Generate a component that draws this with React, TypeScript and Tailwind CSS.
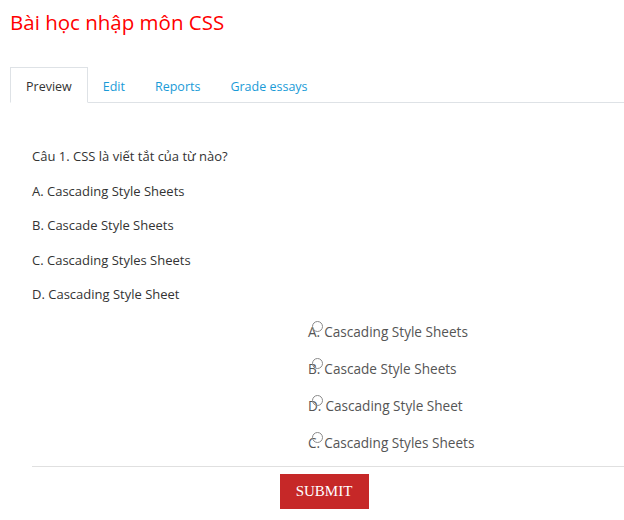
import React from "react";

const questions = [
  "A. Cascading Style Sheets",
  "B. Cascade Style Sheets",
  "C. Cascading Styles Sheets",
  "D. Cascading Style Sheet",
];

const radios = [
  { label: "A.", text: "Cascading Style Sheets" },
  { label: "B.", text: "Cascade Style Sheets" },
  { label: "D.", text: "Cascading Style Sheet" },
  { label: "C.", text: "Cascading Styles Sheets" },
];

export default function App() {
  return (
    <div
      className="w-[624px] h-[520px] bg-white overflow-hidden"
      style={{ fontFamily: '"Open Sans", "Noto Sans", sans-serif' }}
    >
      <h1 className="pl-[10px] pt-[7px] text-[20.5px] leading-[30px] text-[#ff0000] font-normal">
        Bài học nhập môn CSS
      </h1>

      <div className="mt-[30px] ml-[10px] flex border-b border-[#dee2e6] h-[36px] text-[12.5px]">
        <div className="px-[15px] pt-[5px] flex items-center border border-[#dee2e6] border-b-white -mb-px bg-white text-[#333]">
          Preview
        </div>
        <div className="px-[15px] pt-[6px] flex items-center text-[#1a9bd7]">Edit</div>
        <div className="px-[15px] pt-[6px] flex items-center text-[#1a9bd7]">Reports</div>
        <div className="px-[15px] pt-[6px] flex items-center text-[#1a9bd7]">Grade essays</div>
      </div>

      <div className="pl-[32px] pt-[44px]">
        <div className="flex flex-col gap-[15.5px] text-[13px] leading-[19px] text-[#333]">
          <p>Câu 1. CSS là viết tắt của từ nào?</p>
          {questions.map((q) => (
            <p key={q}>{q}</p>
          ))}
        </div>

        <div className="mt-[18px] ml-[276px] flex flex-col gap-[18px] text-[13.6px] leading-[19px] text-[#555]">
          {radios.map((r) => (
            <div key={r.label} className="relative flex items-center">
              <span>{r.label}</span>
              <span className="ml-[4px]">{r.text}</span>
              <span className="absolute left-[4px] top-[-1px] w-[11px] h-[11px] rounded-full border border-[#8a8a8a] bg-transparent" />
            </div>
          ))}
        </div>

        <div className="mt-[14px] border-t border-[#e0e0e0]" />

        <div className="mt-[7px] flex justify-center pr-[8px]">
          <button className="w-[89px] h-[35px] bg-[#c62828] text-white text-[15px]" style={{ fontFamily: '"Liberation Serif", serif' }}>
            SUBMIT
          </button>
        </div>
      </div>
    </div>
  );
}
